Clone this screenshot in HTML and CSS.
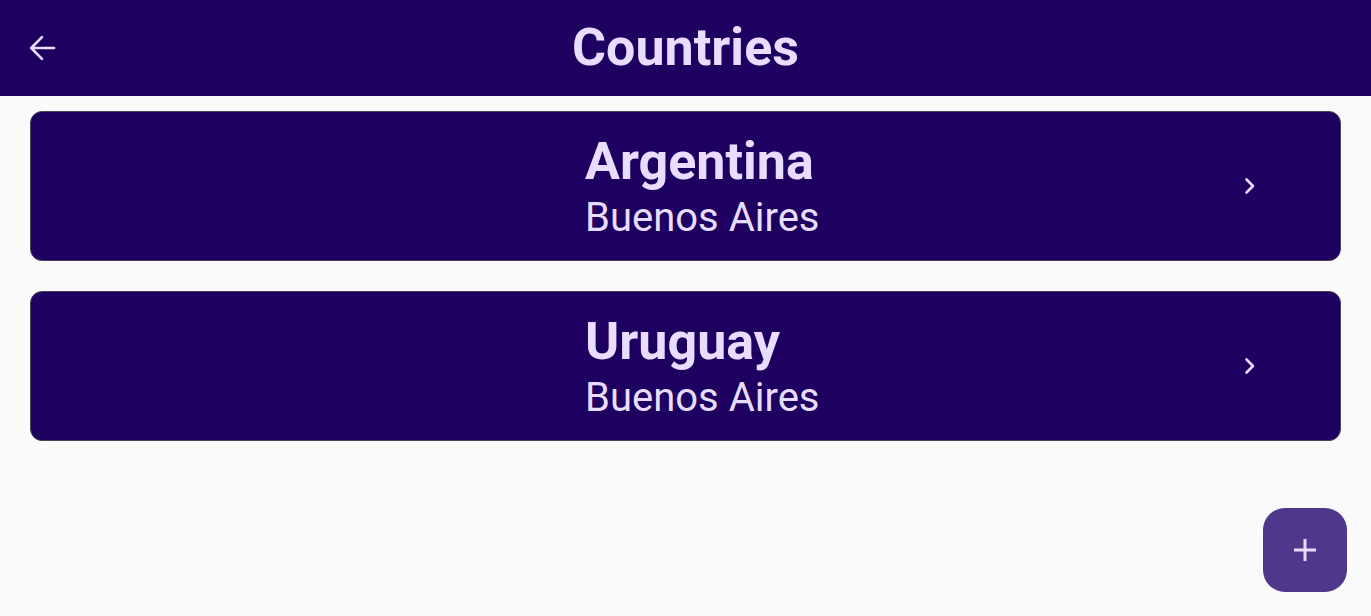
FILE: index.html
```html
<!DOCTYPE html>
<html lang="en">
<head>
<meta charset="utf-8">
<title>Countries</title>
<link rel="stylesheet" href="styles.css">
</head>
<body>
<div class="screen">
  <header class="topbar">
    <button class="back" aria-label="Back">
      <svg width="36" height="36" viewBox="0 0 36 36"><path d="M30 18H7.5M18 7.2L7.2 18 18 28.8" fill="none" stroke="#e8ddff" stroke-width="2.6" stroke-linecap="round" stroke-linejoin="round"/></svg>
    </button>
    <h1 class="title">Countries</h1>
    <span class="spacer"></span>
  </header>
  <main class="list">
    <div class="card">
      <div class="card-text">
        <div class="name">Argentina</div>
        <div class="capital">Buenos Aires</div>
      </div>
      <svg class="chev" width="32" height="32" viewBox="0 0 32 32"><path d="M12.5 9.5L19 16l-6.5 6.5" fill="none" stroke="#e8ddff" stroke-width="2.6" stroke-linecap="round" stroke-linejoin="round"/></svg>
    </div>
    <div class="card">
      <div class="card-text">
        <div class="name">Uruguay</div>
        <div class="capital">Buenos Aires</div>
      </div>
      <svg class="chev" width="32" height="32" viewBox="0 0 32 32"><path d="M12.5 9.5L19 16l-6.5 6.5" fill="none" stroke="#e8ddff" stroke-width="2.6" stroke-linecap="round" stroke-linejoin="round"/></svg>
    </div>
  </main>
  <button class="fab" aria-label="Add">
    <svg width="24" height="24" viewBox="0 0 24 24"><path d="M12 1v22M1 12h22" fill="none" stroke="#e8ddff" stroke-width="3"/></svg>
  </button>
</div>
</body>
</html>
```

FILE: styles.css
```css
html, body {
  margin: 0;
  padding: 0;
}
body {
  background: #fafafa;
  font-family: Roboto, "Noto Sans", sans-serif;
  width: 1371px;
  height: 616px;
  overflow: hidden;
}
.screen {
  position: relative;
  height: 616px;
}
.topbar {
  height: 96px;
  background: #1d0060;
  display: grid;
  grid-template-columns: 60px 1fr 60px;
  align-items: center;
}
.back {
  background: none;
  border: 0;
  padding: 0 0 0 24px;
  display: flex;
  align-items: center;
  cursor: pointer;
}
.title {
  margin: 0;
  text-align: center;
  color: #e8ddff;
  font-size: 52px;
  font-weight: 700;
  line-height: 96px;
}
.list {
  padding: 15px 30px 0;
  display: flex;
  flex-direction: column;
  gap: 30px;
}
.card {
  height: 150px;
  box-sizing: border-box;
  background: #1d0060;
  border: 1px solid #4a4458;
  border-radius: 12px;
  display: flex;
  align-items: center;
  padding-left: 554px;
  padding-right: 74px;
}
.card-text {
  flex: 1;
  color: #e8ddff;
  padding-top: 4px;
}
.name {
  font-size: 52px;
  font-weight: 700;
  line-height: 56px;
}
.capital {
  margin-top: 4px;
  font-size: 40px;
  line-height: 48px;
}
.chev {
  display: block;
}
.fab {
  position: absolute;
  right: 24px;
  bottom: 24px;
  width: 84px;
  height: 84px;
  border: 0;
  border-radius: 22px;
  background: #4f378b;
  display: flex;
  align-items: center;
  justify-content: center;
  padding: 0;
}
```
